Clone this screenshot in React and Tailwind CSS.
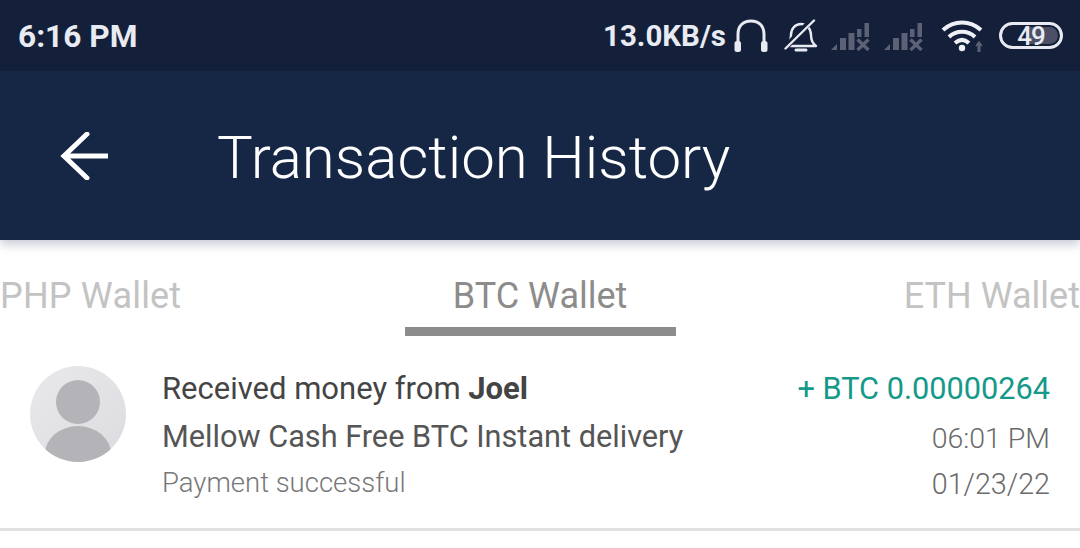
const Headphones = () => (
  <svg width="36" height="34" viewBox="0 0 36 34" className="shrink-0" fill="none">
    <path d="M5 24V15C5 7 10 2 18 2s13 5 13 13v9" stroke="#e8ebf2" strokeWidth="3" />
    <rect x="1.5" y="22" width="6.500" height="11" rx="2.5" fill="#e8ebf2" />
    <rect x="28" y="22" width="6.500" height="11" rx="2.5" fill="#e8ebf2" />
  </svg>
);
const Bell = () => (
  <svg width="34" height="34" viewBox="0 0 34 34" className="shrink-0" fill="none" stroke="#e8ebf2" strokeWidth="2.4">
    <path d="M2 27c4-3 5-6 5-11 0-6 4-11 10-11s10 5 10 11c0 5 1 8 5 11z" strokeLinejoin="round" />
    <path d="M12 31h10" strokeWidth="3" strokeLinecap="round" />
    <path d="M1 29L28 1" stroke="#141f3a" strokeWidth="6" />
    <path d="M1.5 29.500L30 1.500" strokeLinecap="round" />
  </svg>
);
const Signal = () => (
  <svg width="41" height="30" viewBox="0 0 41 30" className="shrink-0" fill="#5c6176">
    <path d="M0 29l6-6v6z" />
    <rect x="9" y="17" width="6" height="12" />
    <rect x="17.500" y="12" width="6" height="17" />
    <rect x="26" y="8" width="4.500" height="8" />
    <rect x="33.500" y="2" width="4.500" height="14" />
    <path d="M26.500 18.500l11 10.500M37.500 18.500L26.500 29" stroke="#5c6176" strokeWidth="3.4" fill="none" />
  </svg>
);
const Wifi = () => (
  <svg width="44" height="34" viewBox="0 0 44 34" className="shrink-0" fill="none" stroke="#eef0f5" strokeWidth="4">
    <path d="M2 11C13 1 29 1 40 11" />
    <path d="M8 18C15 11 27 11 34 18" />
    <path d="M14 24c4.500-4 9.500-4 14 0" />
    <circle cx="21" cy="29" r="3.2" fill="#eef0f5" stroke="none" />
    <path d="M38 24v9" stroke="#5c6176" strokeWidth="3" />
    <path d="M35 27l3-4 3 4" stroke="#5c6176" strokeWidth="1.5" />
  </svg>
);
const Battery = () => (
  <div className="relative flex h-[27px] w-[64px] shrink-0 items-center justify-center rounded-[14px] border-[3px] border-[#e8ebf2]">
    <div className="absolute right-[2px] h-[17px] w-[30px] rounded-r-[9px] bg-[#4b5066]" />
    <span className="relative text-[26px] font-medium leading-none tracking-[-1px] text-[#e8ebf2]">49</span>
  </div>
);
const Avatar = () => (
  <svg width="96" height="96" viewBox="0 0 96 96" className="shrink-0">
    <defs>
      <clipPath id="avatarClip"><circle cx="48" cy="48" r="48" /></clipPath>
      <linearGradient id="avatarBg" x1="0" y1="0" x2="1" y2="1">
        <stop offset="0" stopColor="#e9e9ec" />
        <stop offset="1" stopColor="#dcdce0" />
      </linearGradient>
    </defs>
    <circle cx="48" cy="48" r="48" fill="url(#avatarBg)" />
    <g clipPath="url(#avatarClip)">
      <circle cx="48" cy="36" r="22" fill="#b4b4b8" />
      <ellipse cx="48" cy="88" rx="33" ry="28" fill="#b4b4b8" />
    </g>
  </svg>
);

export default function App() {
  return (
    <div className="flex h-[548px] w-[1080px] flex-col overflow-hidden bg-white font-['Roboto',sans-serif]">
      <div className="flex h-[71px] shrink-0 items-center bg-[#141f3a] pl-[18px] pr-[17px] text-[#e8ebf2]">
        <span className="pt-[3px] text-[31.7px] font-bold leading-none">6:16 PM</span>
        <div className="ml-auto flex items-center">
          <span className="mr-[7px] pt-[3px] text-[29.5px] font-bold leading-none">13.0KB/s</span>
          <Headphones />
          <div className="ml-[15px]"><Bell /></div>
          <div className="ml-[13px]"><Signal /></div>
          <div className="ml-[12px]"><Signal /></div>
          <div className="ml-[16px]"><Wifi /></div>
          <div className="ml-[14px]"><Battery /></div>
        </div>
      </div>
      <div className="z-10 flex h-[169px] shrink-0 items-center bg-[#162745] pl-[60px] shadow-[0_4px_10px_rgba(60,70,110,0.3)]">
        <svg width="48" height="48" viewBox="0 0 48 48" fill="none" stroke="#ffffff" strokeWidth="5" className="shrink-0">
          <path d="M48 24H4" />
          <path d="M27 2L4 24l23 22" strokeLinecap="round" />
        </svg>
        <h1 className="ml-[109px] pt-[4px] text-[60px] font-light leading-none text-white">Transaction History</h1>
      </div>
      <div className="flex h-[96px] shrink-0 justify-between text-[36px] leading-none text-[#c3c3c3]">
        <div className="pt-[38px] tracking-[0.2px]">PHP Wallet</div>
        <div className="-ml-[5px] flex h-full w-[271px] flex-col items-center border-b-[9px] border-[#8c8c8c] pt-[38px] text-[#8c8c8c]">BTC Wallet</div>
        <div className="pt-[38px]">ETH Wallet</div>
      </div>
      <div className="flex h-[195px] shrink-0 border-b-[3px] border-[#e0e0e0] px-[30px] pt-[30px]">
        <Avatar />
        <div className="ml-[36px] flex flex-col">
          <div className="text-[31px] leading-[45px] text-[#444444]">Received money from <span className="font-bold">Joel</span></div>
          <div className="text-[30.7px] leading-[52px] text-[#555555]">Mellow Cash Free BTC Instant delivery</div>
          <div className="text-[27.5px] font-light leading-[40px] text-[#777777]">Payment successful</div>
        </div>
        <div className="ml-auto flex flex-col items-end">
          <div className="text-[30.7px] leading-[45px] text-[#14998a]">+ BTC 0.00000264</div>
          <div className="text-[28.5px] font-light leading-[56px] text-[#6a6a6a]">06:01 PM</div>
          <div className="text-[28.7px] font-light leading-[34px] text-[#6a6a6a]">01/23/22</div>
        </div>
      </div>
    </div>
  );
}
